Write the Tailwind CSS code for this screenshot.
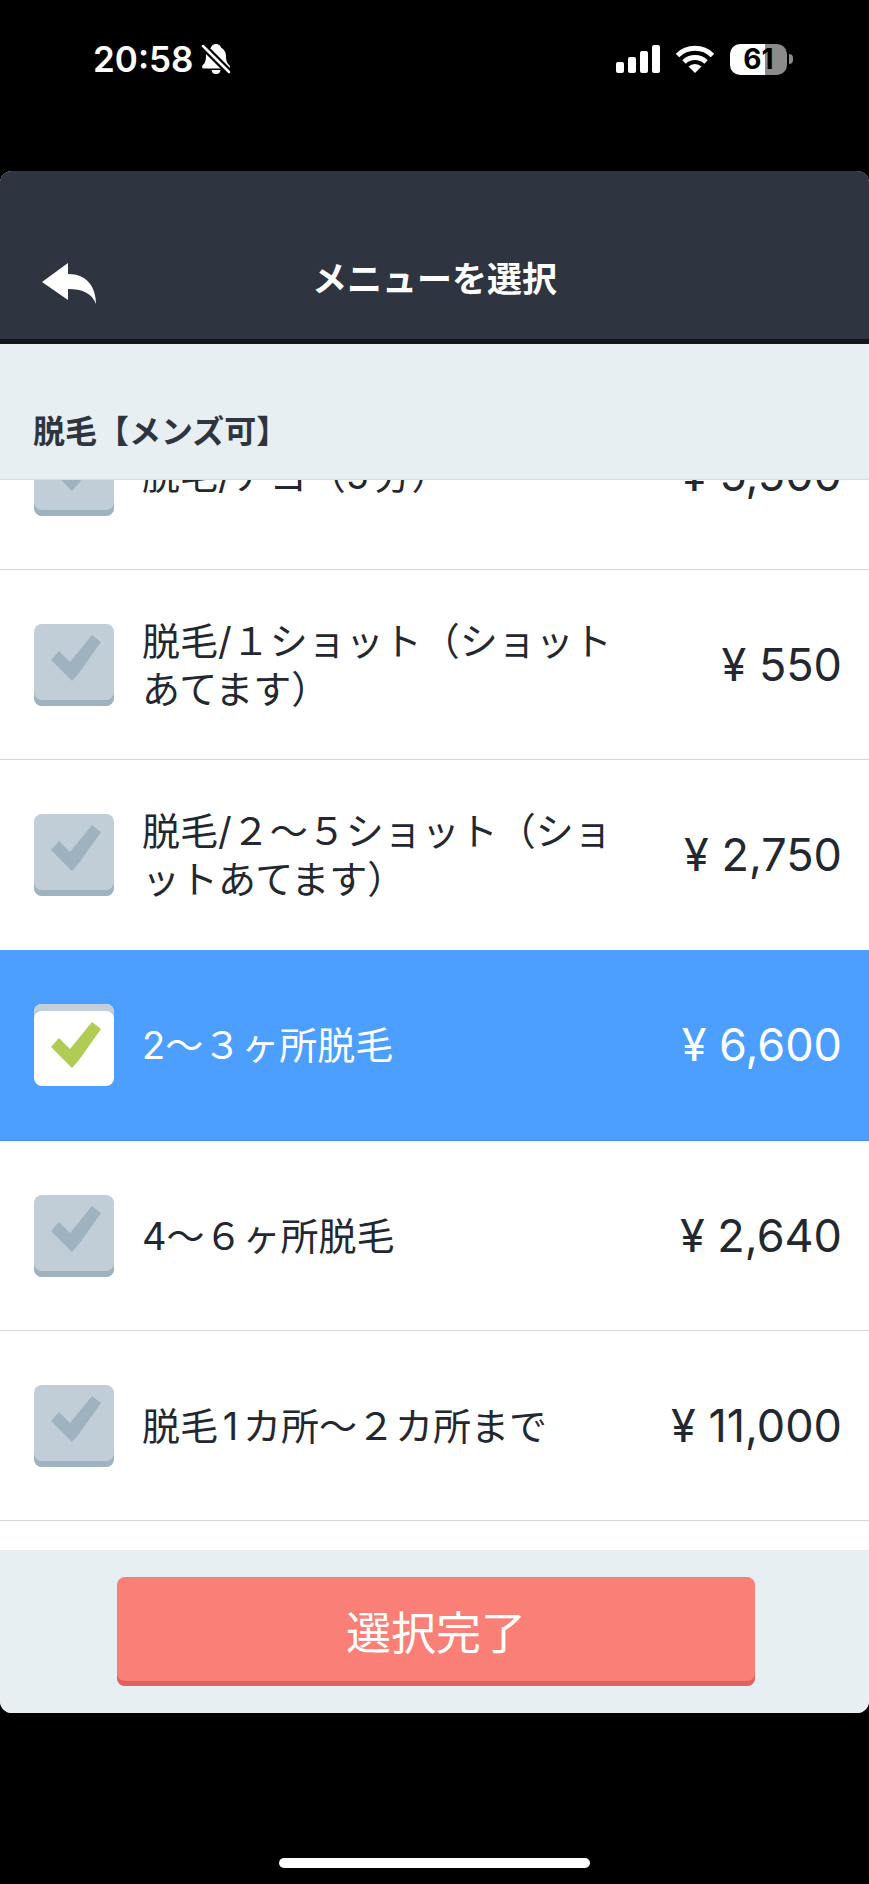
<!DOCTYPE html>
<html lang="ja">
<head>
<meta charset="utf-8">
<meta name="viewport" content="width=device-width, initial-scale=1">
<title>メニューを選択</title>
<script src="https://cdn.jsdelivr.net/npm/@tailwindcss/browser@4"></script>
</head>
<body class="bg-black font-['Inter','Noto_Sans_CJK_JP',sans-serif] text-[#232830]">
<svg class="hidden" aria-hidden="true">
  <symbol id="tick" viewBox="0 0 80 82"><path d="M17 36 25 27 36 38 58 11 67 18 45 49 38 57Z" fill="currentColor"/></symbol>
</svg>
<div class="flex h-screen flex-col">
  <!-- Status bar -->
  <div class="flex h-[171px] shrink-0 items-start justify-between pt-[35px] pr-[76px] pl-[93px] text-white">
    <div class="flex h-12 items-center gap-2">
      <time class="text-[35px] leading-none font-semibold">20:58</time>
      <svg class="h-8 w-[30px]" viewBox="0 0 30 32" aria-label="消音">
        <path d="M15 1C17.500 1 19.500 2.500 20 4.500C23.500 6.500 25 9.500 25 13C25 18 26 20 28.500 22.500C29.500 24 29 25.500 27 25.500H3C1 25.500 .5 24 1.500 22.500C4 20 5 18 5 13C5 9.500 6.500 6.500 10 4.500C10.500 2.500 12.500 1 15 1Z" fill="#fff"/>
        <path d="M10.500 27H19.500C19 30 17.500 31 15 31S11 30 10.500 27Z" fill="#fff"/>
        <path d="M2 3 28 29" stroke="#000" stroke-width="7"/>
        <path d="M2 3 28 29" stroke="#fff" stroke-width="2.500" stroke-linecap="round"/>
      </svg>
    </div>
    <div class="flex h-12 items-center gap-[15px]">
      <svg class="h-[30px] w-[44px]" viewBox="0 0 44 30" fill="#fff" aria-label="電波">
        <rect x="0" y="18" width="8" height="11" rx="2"/><rect x="12" y="13" width="8" height="16" rx="2"/><rect x="24" y="7" width="8" height="22" rx="2"/><rect x="36" y="1" width="8" height="28" rx="2"/>
      </svg>
      <svg class="h-[30px] w-[40px]" viewBox="0 0 40 30" fill="none" stroke="#fff" stroke-width="5" aria-label="Wi-Fi">
        <path d="M2.500 11.500A25 25 0 0 1 37.500 11.500"/><path d="M9 18A16 16 0 0 1 31 18"/>
        <path d="M20 29 13.500 22.500A9.500 9.500 0 0 1 26.500 22.500Z" fill="#fff" stroke="none"/>
      </svg>
      <div class="flex items-center gap-[2px]">
        <div class="flex h-[31px] w-[57px] items-center justify-center rounded-[10px] bg-linear-to-r from-white from-61% to-[#8b8b8b] to-61% text-[28px] leading-none font-bold text-black">61</div>
        <div class="h-[10px] w-1 rounded-r-full bg-[#8b8b8b]"></div>
      </div>
    </div>
  </div>

  <div class="flex min-h-0 flex-1 flex-col overflow-hidden rounded-xl bg-white">
    <header class="grid h-[173px] shrink-0 grid-cols-[1fr_auto_1fr] items-center border-b-[5px] border-[#12161b] bg-[#2f3540] px-[42px] pt-12 text-white">
      <button type="button" aria-label="戻る" class="w-[54px] pt-2">
        <svg class="h-[41px] w-[54px]" viewBox="0 0 54 41" fill="#fff"><path d="M0 19 26 0V11C45 11 54 24 54 41C50 30 40 26 26 26V37Z"/></svg>
      </button>
      <h1 class="text-[35px] leading-[48px] font-bold">メニューを選択</h1>
    </header>
    <h2 class="shrink-0 border-b border-[#d9dee1] bg-[#e7eff3] pt-16 pb-[23px] pl-[33px] text-[32px] leading-[48px] font-bold text-[#2f3540]">脱毛【メンズ可】</h2>

    <ul class="min-h-0 flex-1 overflow-hidden text-[38px] leading-[48px] [line-break:normal] [text-autospace:normal]">
      <li class="-mt-[100px] border-b border-[#d5d7d9]">
        <label class="flex h-[189px] items-center pr-[27px] pl-[34px]">
          <span class="grid shrink-0"><input type="checkbox" class="col-start-1 row-start-1 h-[82px] w-20 appearance-none rounded-lg bg-[#c1ced8] shadow-[inset_0_-6px_#9fb2c0]"><svg class="pointer-events-none col-start-1 row-start-1 h-[82px] w-20 text-[#9fb2c0]"><use href="#tick"/></svg></span>
          <span class="ml-7 flex-1">脱毛/アゴ（5分）</span>
          <span class="w-[216px] text-right text-[45px] whitespace-nowrap">¥ 5,500</span>
        </label>
      </li>
      <li class="border-b border-[#d5d7d9]">
        <label class="flex h-[189px] items-center pr-[27px] pl-[34px]">
          <span class="grid shrink-0"><input type="checkbox" class="col-start-1 row-start-1 h-[82px] w-20 appearance-none rounded-lg bg-[#c1ced8] shadow-[inset_0_-6px_#9fb2c0]"><svg class="pointer-events-none col-start-1 row-start-1 h-[82px] w-20 text-[#9fb2c0]"><use href="#tick"/></svg></span>
          <span class="ml-7 flex-1">脱毛/１ショット（ショットあてます）</span>
          <span class="w-[216px] text-right text-[45px] whitespace-nowrap">¥ 550</span>
        </label>
      </li>
      <li>
        <label class="flex h-[190px] items-center pr-[27px] pl-[34px]">
          <span class="grid shrink-0"><input type="checkbox" class="col-start-1 row-start-1 h-[82px] w-20 appearance-none rounded-lg bg-[#c1ced8] shadow-[inset_0_-6px_#9fb2c0]"><svg class="pointer-events-none col-start-1 row-start-1 h-[82px] w-20 text-[#9fb2c0]"><use href="#tick"/></svg></span>
          <span class="ml-7 flex-1">脱毛/２～５ショット（ショットあてます）</span>
          <span class="w-[216px] text-right text-[45px] whitespace-nowrap">¥ 2,750</span>
        </label>
      </li>
      <li class="border-b border-[#4a90e2] bg-[#4c9fff] text-white">
        <label class="flex h-[190px] items-center pr-[27px] pl-[34px]">
          <span class="grid shrink-0"><input type="checkbox" checked class="col-start-1 row-start-1 h-[82px] w-20 appearance-none rounded-lg bg-white shadow-[inset_0_7px_#c3cedb]"><svg class="pointer-events-none col-start-1 row-start-1 mt-[7px] h-[82px] w-20 -mb-[7px] text-[#b0cc55]"><use href="#tick"/></svg></span>
          <span class="ml-7 flex-1">2～３ヶ所脱毛</span>
          <span class="w-[216px] text-right text-[45px] whitespace-nowrap">¥ 6,600</span>
        </label>
      </li>
      <li class="border-b border-[#d5d7d9]">
        <label class="flex h-[189px] items-center pr-[27px] pl-[34px]">
          <span class="grid shrink-0"><input type="checkbox" class="col-start-1 row-start-1 h-[82px] w-20 appearance-none rounded-lg bg-[#c1ced8] shadow-[inset_0_-6px_#9fb2c0]"><svg class="pointer-events-none col-start-1 row-start-1 h-[82px] w-20 text-[#9fb2c0]"><use href="#tick"/></svg></span>
          <span class="ml-7 flex-1">4～６ヶ所脱毛</span>
          <span class="w-[216px] text-right text-[45px] whitespace-nowrap">¥ 2,640</span>
        </label>
      </li>
      <li class="border-b border-[#d5d7d9]">
        <label class="flex h-[189px] items-center pr-[27px] pl-[34px]">
          <span class="grid shrink-0"><input type="checkbox" class="col-start-1 row-start-1 h-[82px] w-20 appearance-none rounded-lg bg-[#c1ced8] shadow-[inset_0_-6px_#9fb2c0]"><svg class="pointer-events-none col-start-1 row-start-1 h-[82px] w-20 text-[#9fb2c0]"><use href="#tick"/></svg></span>
          <span class="ml-7 flex-1">脱毛1カ所～２カ所まで</span>
          <span class="w-[216px] text-right text-[45px] whitespace-nowrap">¥ 11,000</span>
        </label>
      </li>
    </ul>

    <div class="shrink-0 bg-[#e7eff3] py-[27px] pr-[114px] pl-[117px]">
      <button type="button" class="h-[109px] w-full rounded-lg bg-[#f97f77] pt-1 text-[45px] leading-none text-white shadow-[inset_0_-5px_#e0625d]">選択完了</button>
    </div>
  </div>

  <!-- Home indicator -->
  <div class="flex h-[171px] shrink-0 items-end justify-center pb-4">
    <div class="h-[10px] w-[311px] rounded-full bg-white"></div>
  </div>
</div>
</body>
</html>
